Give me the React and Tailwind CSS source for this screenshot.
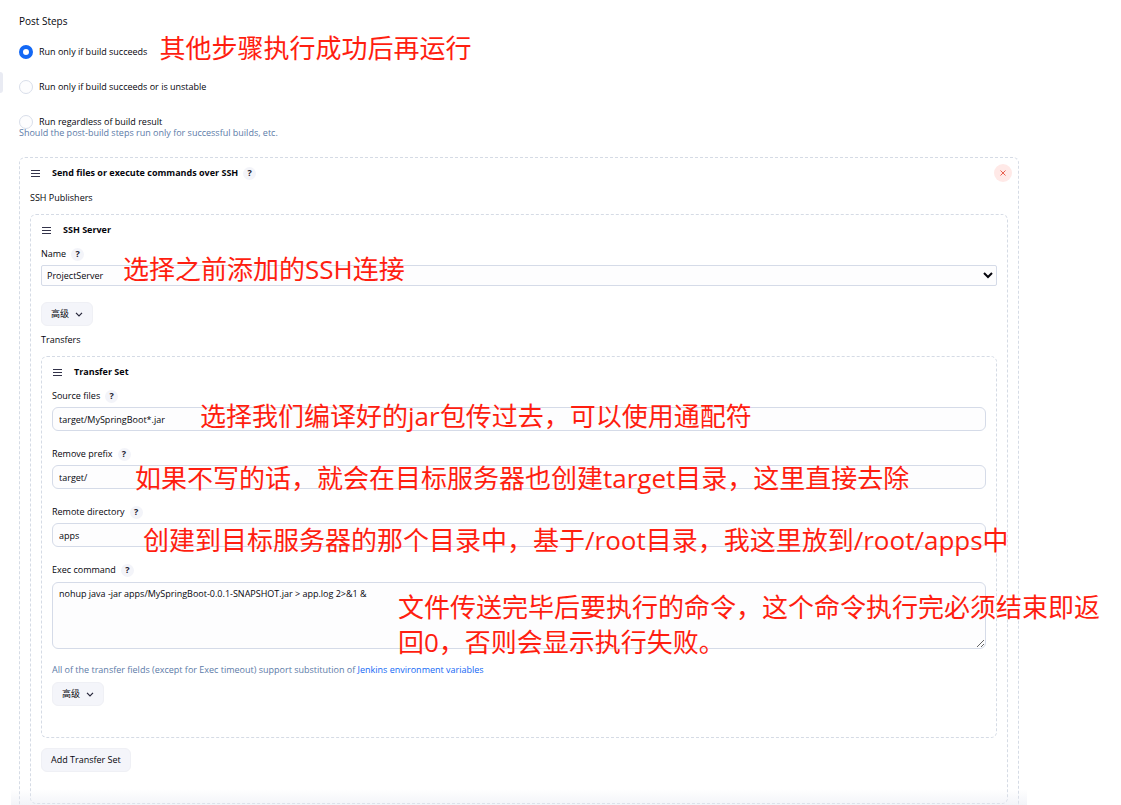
import { useState } from 'react';

const fieldClass = 'block w-full rounded-md border border-[#d5dbe8] bg-[#fdfdfe] px-1.5 outline-none focus:border-[#1368f5]';
const panelClass = 'rounded-md border border-dashed border-[#d5dbe5] px-[10px] pt-1.5';
const buttonClass = 'flex h-6 items-center gap-1.5 rounded-md border border-[#eff0f5] bg-[#f4f5fa] px-[9px]';

const runOptions = [
  { value: 'success', label: 'Run only if build succeeds', note: '其他步骤执行成功后再运行' },
  { value: 'unstable', label: 'Run only if build succeeds or is unstable' },
  { value: 'always', label: 'Run regardless of build result' },
];

const Help = () => (
  <button type="button" aria-label="Help" className="flex size-[13px] items-center justify-center rounded-full bg-[#f3f4f9] font-bold leading-3 text-[#20202f]">
    ?
  </button>
);

const Note = ({ className = '', children }) => (
  <p className={`pointer-events-none whitespace-nowrap text-[26px] leading-[35px] text-[#ff1e10] ${className}`}>{children}</p>
);

const PanelHeader = ({ title, help, onRemove }) => (
  <div className="flex h-[18px] items-center">
    <svg viewBox="0 0 10 8" className="h-2 w-[10px] fill-none stroke-[#33334a]">
      <path d="M1 1.5h9M1 4.5h9M1 7.5h9" />
    </svg>
    <h2 className="ml-3 mr-[5px] font-bold">{title}</h2>
    {help && <Help />}
    {onRemove && (
      <button type="button" aria-label="Remove" className="-mr-1 ml-auto flex size-[18px] items-center justify-center rounded-full bg-[#ffe9e7]">
        <svg viewBox="0 0 6 6" className="size-1.5 fill-none stroke-[#e8604f]">
          <path d="M.5.5l5 5M5.5.5l-5 5" />
        </svg>
      </button>
    )}
  </div>
);

const FieldLabel = ({ htmlFor, children }) => (
  <div className="flex h-4 items-center gap-[5px]">
    <label htmlFor={htmlFor}>{children}</label>
    <Help />
  </div>
);

const AdvancedButton = ({ className }) => (
  <button type="button" className={`${buttonClass} ${className}`}>
    高级
    <svg viewBox="0 0 8 5" className="h-[5px] w-2 fill-none stroke-[#26263a]" strokeWidth="1.2">
      <path d="M1 .8l3 3 3-3" />
    </svg>
  </button>
);

const TextField = ({ id, label, defaultValue, className, note, noteClass }) => (
  <div className={className}>
    <FieldLabel htmlFor={id}>{label}</FieldLabel>
    <div className="relative mt-[3px]">
      <input id={id} type="text" defaultValue={defaultValue} className={`${fieldClass} h-6`} />
      <Note className={`absolute ${noteClass}`}>{note}</Note>
    </div>
  </div>
);

const App = () => {
  const [runWhen, setRunWhen] = useState('success');

  return (
    <main className="relative flex min-h-screen flex-col overflow-hidden bg-white pl-[19px] pr-[102px] pt-[13px] font-['Open_Sans','Noto_Sans_CJK_SC',sans-serif] text-[9px] leading-4 text-[#05050c]">
      <div className="absolute left-0 top-[72px] h-[21px] w-[3px] rounded-r bg-[#e9ebf3]" />

      <h1 className="text-[10px]">Post Steps</h1>
      <div role="radiogroup" aria-label="Post Steps" className="mt-4 flex flex-col gap-[21px]">
        {runOptions.map(({ value, label, note }) => (
          <div key={value} className="flex h-[14px] items-center">
            <label className="flex items-center gap-1.5 leading-3">
              <input
                type="radio"
                name="run-when"
                value={value}
                checked={runWhen === value}
                onChange={() => setRunWhen(value)}
                className="size-[14px] appearance-none rounded-full border border-[#d9deea] bg-[#fdfdfe] checked:border-4 checked:border-[#1368f5] checked:bg-white"
              />
              {label}
            </label>
            {note && <Note className="-mt-2 ml-3">{note}</Note>}
          </div>
        ))}
      </div>
      <p className="-mt-px leading-[10px] text-[#5c7ba8]">Should the post-build steps run only for successful builds, etc.</p>

      <section className={`${panelClass} mt-[19px] flex-1 rounded-b-none border-b-0`}>
        <PanelHeader title="Send files or execute commands over SSH" help onRemove />
        <p className="mt-2">SSH Publishers</p>

        <section className={`${panelClass} mt-2 pb-[31px]`}>
          <PanelHeader title="SSH Server" />
          <div className="mt-[7px]">
            <FieldLabel htmlFor="server">Name</FieldLabel>
            <div className="relative mt-[3px]">
              <select id="server" className="block h-[21px] w-full rounded-xs border border-[#d5dbe8] bg-[#fdfdfe] pl-px pr-[3px]">
                <option>ProjectServer</option>
              </select>
              <Note className="absolute -top-[13px] left-[82px]">选择之前添加的SSH连接</Note>
            </div>
          </div>
          <AdvancedButton className="mt-4" />
          <p className="mt-1.5">Transfers</p>

          <section className={`${panelClass} mt-2 pb-[31px]`}>
            <PanelHeader title="Transfer Set" />
            <TextField
              id="source-files"
              label="Source files"
              defaultValue="target/MySpringBoot*.jar"
              className="mt-[7px]"
              note="选择我们编译好的jar包传过去，可以使用通配符"
              noteClass="-top-2 left-[148px]"
            />
            <TextField
              id="remove-prefix"
              label="Remove prefix"
              defaultValue="target/"
              className="mt-[15px]"
              note="如果不写的话，就会在目标服务器也创建target目录，这里直接去除"
              noteClass="-top-1 left-[83px]"
            />
            <TextField
              id="remote-directory"
              label="Remote directory"
              defaultValue="apps"
              className="mt-[15px]"
              note="创建到目标服务器的那个目录中，基于/root目录，我这里放到/root/apps中"
              noteClass="top-0 left-[91px]"
            />
            <div className="mt-[15px]">
              <FieldLabel htmlFor="exec-command">Exec command</FieldLabel>
              <div className="relative mt-1">
                <textarea
                  id="exec-command"
                  className={`${fieldClass} h-[67px] resize py-[3px]`}
                  defaultValue="nohup java -jar apps/MySpringBoot-0.0.1-SNAPSHOT.jar > app.log 2>&1 &"
                />
                <Note className="absolute left-[346px] top-2">
                  文件传送完毕后要执行的命令，这个命令执行完必须结束即返
                  <br />
                  回0，否则会显示执行失败。
                </Note>
              </div>
            </div>
            <p className="mt-[13px] text-[#5c7ba8]">
              All of the transfer fields (except for Exec timeout) support substitution of{' '}
              <a href="#env-vars" className="text-[#1368f5]">Jenkins environment variables</a>
            </p>
            <AdvancedButton className="mt-1" />
          </section>

          <button type="button" className={`${buttonClass} mt-[10px]`}>Add Transfer Set</button>
        </section>
      </section>

      <div className="pointer-events-none sticky bottom-0 -mx-2 -mt-4 h-4 bg-gradient-to-t from-[#e6e9f2]/50 to-transparent" />
    </main>
  );
};

export default App;
